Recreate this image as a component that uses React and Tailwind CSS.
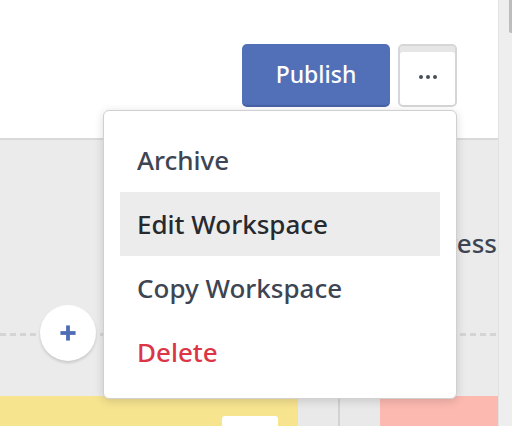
import { Plus } from 'lucide-react';

const menu = [
  { label: 'Archive', cls: 'text-[#3e4552]' },
  { label: 'Edit Workspace', cls: 'text-[#26292e] bg-[#ececec]' },
  { label: 'Copy Workspace', cls: 'text-[#3e4552]' },
  { label: 'Delete', cls: 'text-[#dc3545]' },
];

export default function App() {
  return (
    <div
      className="relative w-[512px] h-[426px] flex overflow-hidden bg-white"
      style={{ fontFamily: '"Noto Sans", "Open Sans", "Liberation Sans", sans-serif' }}
    >
      <div className="w-[498px] h-full flex flex-col overflow-hidden">
        {/* Header */}
        <div className="h-[140px] shrink-0 bg-white border-b-2 border-[#d9d9d9] flex justify-end items-start pt-[44px] pr-[41px] gap-2">
          <button className="w-[148px] h-[63px] rounded-[5px] bg-[#5170b7] border-b-2 border-[#4862a6] text-white text-[23px] font-medium">
            Publish
          </button>
          <button className="w-[59px] h-[63px] rounded-[5px] bg-white border-2 border-[#d6d6d6] shadow-[inset_0_6px_0_#e6e6e6] flex items-center justify-center gap-[3px] pt-[2px]">
            <span className="w-[4px] h-[4px] rounded-full bg-[#4a4f57]" />
            <span className="w-[4px] h-[4px] rounded-full bg-[#4a4f57]" />
            <span className="w-[4px] h-[4px] rounded-full bg-[#4a4f57]" />
          </button>
        </div>

        {/* Board */}
        <div className="flex-1 bg-[#ebebeb] flex flex-col">
          <div className="h-[86px] shrink-0" />
          <div className="h-[34px] flex justify-end text-[26px] leading-[34px] font-medium text-[#3e4552] whitespace-nowrap">
            <span className="mr-[1px]">In Progress</span>
          </div>
          <div className="h-[45px] shrink-0" />
          <div className="relative h-[56px] flex items-center">
            <div className="absolute left-0 right-0 top-[28px] h-[3px] bg-[repeating-linear-gradient(90deg,#d4d4d4_0_6px,transparent_6px_10px)]" />
            <div className="relative ml-[40px] w-[56px] h-[56px] rounded-full bg-white shadow-[0_2px_3px_rgba(0,0,0,0.15)] flex items-center justify-center">
              <Plus size={26} strokeWidth={3.5} className="text-[#4f6db5]" strokeLinecap="butt" />
            </div>
          </div>
          <div className="h-[35px] shrink-0" />
          <div className="flex-1 flex">
            <div className="w-[298px] bg-[#f7e48f] pt-[20px] pl-[222px]">
              <div className="w-[56px] h-[20px] bg-white rounded-t-[3px]" />
            </div>
            <div className="w-[82px] bg-[#e9e9e9] flex justify-center">
              <div className="w-[2px] h-full bg-[#d2d2d2]" />
            </div>
            <div className="flex-1 bg-[#fcb9b0]" />
          </div>
        </div>
      </div>

      {/* Scrollbar */}
      <div className="w-[14px] h-full bg-[#eeeeee] border-l border-[#e2e2e2] flex justify-end">
        <div className="w-[3px] h-[33px] rounded-bl-[2px] bg-[#bdbdbd]" />
      </div>

      {/* Dropdown menu */}
      <div className="absolute left-[103px] top-[110px] w-[354px] h-[289px] bg-white rounded-[6px] border border-[#d0d0d0] shadow-[0_2px_10px_rgba(0,0,0,0.15)] py-[17px] px-[16px] flex flex-col">
        {menu.map((m) => (
          <div
            key={m.label}
            className={`h-[64px] shrink-0 flex items-center px-[17px] text-[26px] font-medium ${m.cls}`}
          >
            {m.label}
          </div>
        ))}
      </div>
    </div>
  );
}
